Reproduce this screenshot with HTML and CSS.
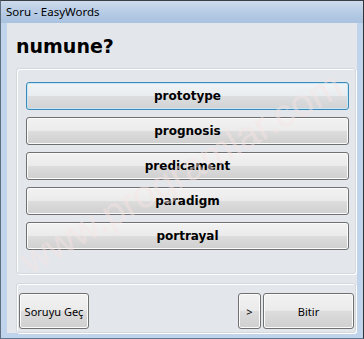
FILE: index.html
```html
<!DOCTYPE html>
<html>
<head>
<meta charset="utf-8">
<link rel="stylesheet" href="styles.css">
</head>
<body>
<div class="window">
  <div class="titlebar">Soru - EasyWords</div>
  <div class="client">
    <div class="question">numune?</div>
    <div class="group answers">
      <button class="btn opt focus">prototype</button>
      <button class="btn opt">prognosis</button>
      <button class="btn opt">predicament</button>
      <button class="btn opt">paradigm</button>
      <button class="btn opt">portrayal</button>
    </div>
    <div class="group footer">
      <button class="btn skip">Soruyu Geç</button>
      <span class="spacer"></span>
      <button class="btn next">&gt;</button>
      <button class="btn finish">Bitir</button>
    </div>
  </div>
  <div class="watermark">www.programlar.com</div>
</div>
</body>
</html>
```
FILE: styles.css
```css
html, body {
  margin: 0;
  padding: 0;
  background: #ffffff;
}
.window {
  position: relative;
  width: 364px;
  height: 339px;
  box-sizing: border-box;
  border-top: 1px solid #3a3f45;
  border-right: 1px solid #2f3438;
  border-left: 1px solid #5f6f80;
  border-bottom: 1px solid #5f7890;
  background: #c0d4ec;
  overflow: hidden;
}
.titlebar {
  height: 22px;
  line-height: 22px;
  padding-left: 5px;
  font-family: "Noto Sans", "DejaVu Sans", sans-serif;
  font-size: 11.5px;
  color: #000;
  background: linear-gradient(#cddbec, #b3c9e4 60%, #a9c2e0);
}
.client {
  margin: 0 6px;
  height: 310px;
  background: #e3e6eb;
  display: flex;
  flex-direction: column;
}
.question {
  padding: 12px 0 0 9px;
  height: 45px;
  box-sizing: border-box;
  font-family: "DejaVu Sans", sans-serif;
  font-weight: bold;
  font-size: 19px;
  line-height: 22px;
  color: #000;
}
.group {
  box-sizing: border-box;
  margin-left: 9px;
  width: 340px;
  border: 1px solid #d5d9de;
  border-radius: 3px;
  box-shadow: inset 1px 1px 0 #ffffff, 1px 1px 0 #ffffff;
}
.answers {
  height: 206px;
  padding: 13px 0 0 9px;
  display: flex;
  flex-direction: column;
  gap: 7px;
}
.footer {
  margin-top: 9px;
  height: 50px;
  padding: 9px 1px 0 2px;
  display: flex;
  align-items: flex-start;
}
.spacer { flex: 1; }
.btn {
  margin: 0;
  padding: 0;
  box-sizing: border-box;
  border: 1px solid #707070;
  border-radius: 3px;
  background: linear-gradient(#f2f2f2 0%, #ebebeb 48%, #dddddd 50%, #cfcfcf 100%);
  box-shadow: inset 0 0 0 1px #fbfbfb;
  color: #000;
  font-family: "Noto Sans", "DejaVu Sans", sans-serif;
  font-size: 11px;
}
.opt {
  width: 323px;
  height: 28px;
  font-family: "DejaVu Sans", sans-serif;
  font-weight: bold;
  font-size: 12px;
}
.opt.focus {
  border-color: #3c8ab8;
  box-shadow: inset 0 0 0 1px #c9e6f6;
  background: linear-gradient(#f1f4f6 0%, #eaedef 48%, #dcdee0 50%, #d0d2d4 100%);
}
.skip {
  width: 70px;
  height: 36px;
}
.next {
  width: 23px;
  height: 36px;
  margin-right: 2px;
}
.finish {
  width: 91px;
  height: 36px;
}
.watermark {
  position: absolute;
  left: -10px;
  top: 150px;
  width: 380px;
  text-align: center;
  font-family: "Liberation Sans", sans-serif;
  font-size: 39px;
  color: rgba(248, 228, 228, 0.45);
  transform: rotate(-30deg);
  pointer-events: none;
  white-space: nowrap;
}
```
